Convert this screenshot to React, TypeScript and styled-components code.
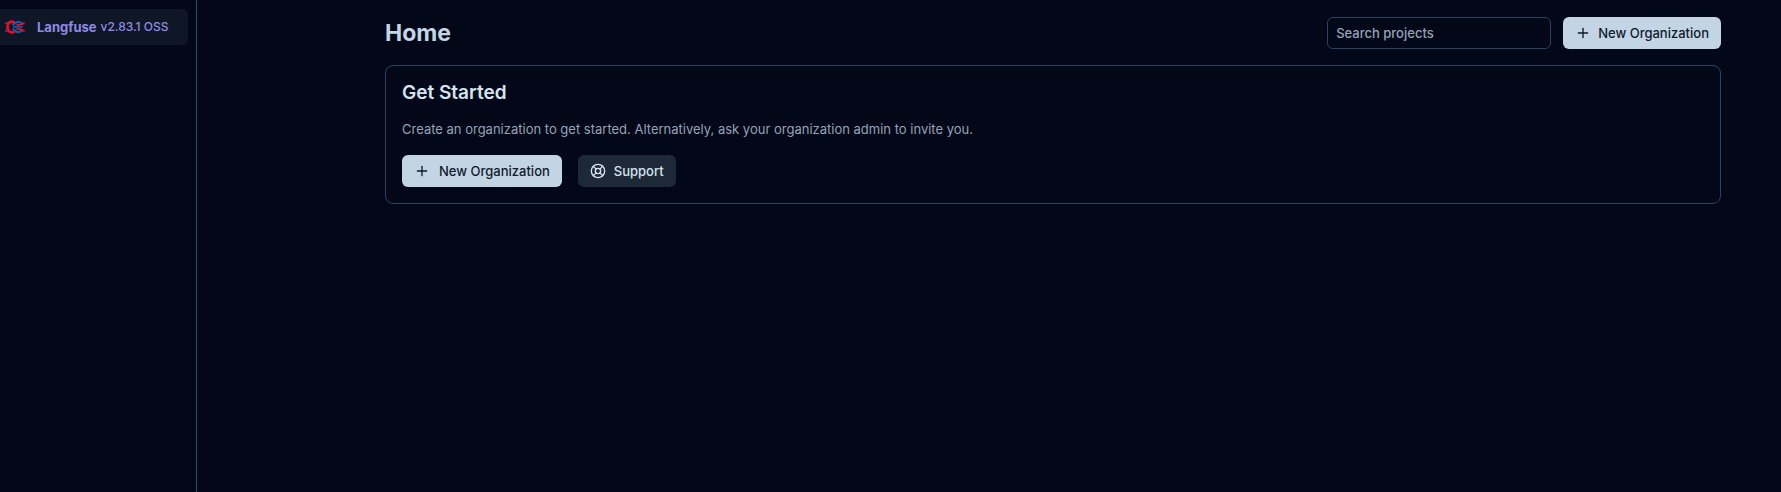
import React from "react";
import styled, { createGlobalStyle } from "styled-components";
import { LifeBuoy, Plus } from "lucide-react";

const GlobalStyle = createGlobalStyle`
  *, *::before, *::after { box-sizing: border-box; }
  body {
    margin: 0;
    background: #020817;
    color: #d6e3f0;
    font-family: Inter, "Liberation Sans", sans-serif;
    font-size: 13px;
    line-height: 20px;
    -webkit-font-smoothing: antialiased;
  }
  h1, h2, p { margin: 0; }
`;

const Shell = styled.div`
  display: flex;
  min-height: 100vh;
`;

const Sidebar = styled.nav`
  flex: 0 0 197px;
  padding: 9px 8px 0 0;
  border-right: 1px solid #334865;
`;

const Brand = styled.a`
  display: flex;
  align-items: center;
  height: 36px;
  padding-left: 5px;
  border-radius: 0 6px 6px 0;
  background: #0f1726;
  color: #918be3;
  text-decoration: none;
  white-space: nowrap;
`;

const BrandName = styled.span`
  margin-left: 12px;
  font-weight: 700;
`;

const Version = styled.span`
  margin-left: 4px;
  font-size: 12px;
  font-weight: 500;
`;

const Main = styled.main`
  flex: 1;
  min-width: 0;
  padding: 17px 60px 16px 188px;
`;

const Header = styled.header`
  display: flex;
  align-items: center;
  justify-content: space-between;
  gap: 12px;
  margin-bottom: 16px;
`;

const PageTitle = styled.h1`
  color: #c4d5e5;
  font-size: 23px;
  font-weight: 700;
  line-height: 32px;
`;

const Actions = styled.div<{ $gap: number }>`
  display: flex;
  gap: ${(p) => p.$gap}px;
`;

const Search = styled.input`
  width: 224px;
  height: 32px;
  padding: 0 8px;
  border: 1px solid #2e415c;
  border-radius: 6px;
  background: transparent;
  color: #d6e3f0;
  font: inherit;
  &::placeholder { color: #94a3b8; opacity: 1; font-weight: 500; }
`;

const Button = styled.button<{ $tone: "primary" | "secondary"; $iconGap: number }>`
  display: inline-flex;
  align-items: center;
  gap: ${(p) => p.$iconGap}px;
  height: 32px;
  padding: 0 12px;
  border: 0;
  border-radius: 6px;
  background: ${(p) => (p.$tone === "primary" ? "#c3d5e5" : "#1e2938")};
  color: ${(p) => (p.$tone === "primary" ? "#0f1a2c" : "#d6e3f0")};
  font: inherit;
  font-weight: 500;
  white-space: nowrap;
  svg { flex: none; }
`;

const Card = styled.section`
  padding: 15px 16px 16px;
  border: 1px solid #2e415c;
  border-radius: 8px;
`;

const CardTitle = styled.h2`
  font-size: 19px;
  font-weight: 600;
  line-height: 24px;
`;

const Description = styled.p`
  margin: 14px 0 16px;
  color: #94a3b8;
`;

const Logo = () => (
  <svg width="20" height="14" viewBox="0 0 20 14" fill="none" aria-hidden="true">
    <g stroke="#0a60b0" strokeWidth="2.200">
      <path d="M0 3h2.500M0 11h2.500" strokeWidth="1.600" />
      <path d="M7.500 5C9.500 4.500 10 1.800 13.500 1.800c2.500 0 3 1.700 4.500 2.700M7.500 9c2 .5 2.500 3.200 6 3.200 2.500 0 3-1.700 4.500-2.700" />
      <path d="M8 7h9.500" strokeWidth="1.600" />
    </g>
    <g stroke="#f20a20">
      <path d="M9.500 2.500C6 .5 2.500 2.300 2.500 7s3.500 6.500 7 4.500" strokeWidth="2.600" />
      <path d="M11.500 4.800h3.200c2 0 2.500-1.600 5-1.600M11.500 9.200h3.200c2 0 2.500 1.600 5 1.600" strokeWidth="1.800" />
    </g>
  </svg>
);

const NewOrganization = ({ iconGap }: { iconGap: number }) => (
  <Button type="button" $tone="primary" $iconGap={iconGap}>
    <Plus size={16} strokeWidth={2} aria-hidden="true" />
    New Organization
  </Button>
);

export default function App() {
  return (
    <>
      <GlobalStyle />
      <Shell>
        <Sidebar aria-label="Main">
          <Brand href="#">
            <Logo />
            <BrandName>Langfuse</BrandName>
            <Version>v2.83.1 OSS</Version>
          </Brand>
        </Sidebar>
        <Main>
          <Header>
            <PageTitle>Home</PageTitle>
            <Actions $gap={12}>
              <Search type="search" aria-label="Search projects" placeholder="Search projects" />
              <NewOrganization iconGap={7} />
            </Actions>
          </Header>
          <Card>
            <CardTitle>Get Started</CardTitle>
            <Description>
              Create an organization to get started. Alternatively, ask your organization admin to invite you.
            </Description>
            <Actions $gap={16}>
              <NewOrganization iconGap={9} />
              <Button type="button" $tone="secondary" $iconGap={8}>
                <LifeBuoy size={16} strokeWidth={2} aria-hidden="true" />
                Support
              </Button>
            </Actions>
          </Card>
        </Main>
      </Shell>
    </>
  );
}
